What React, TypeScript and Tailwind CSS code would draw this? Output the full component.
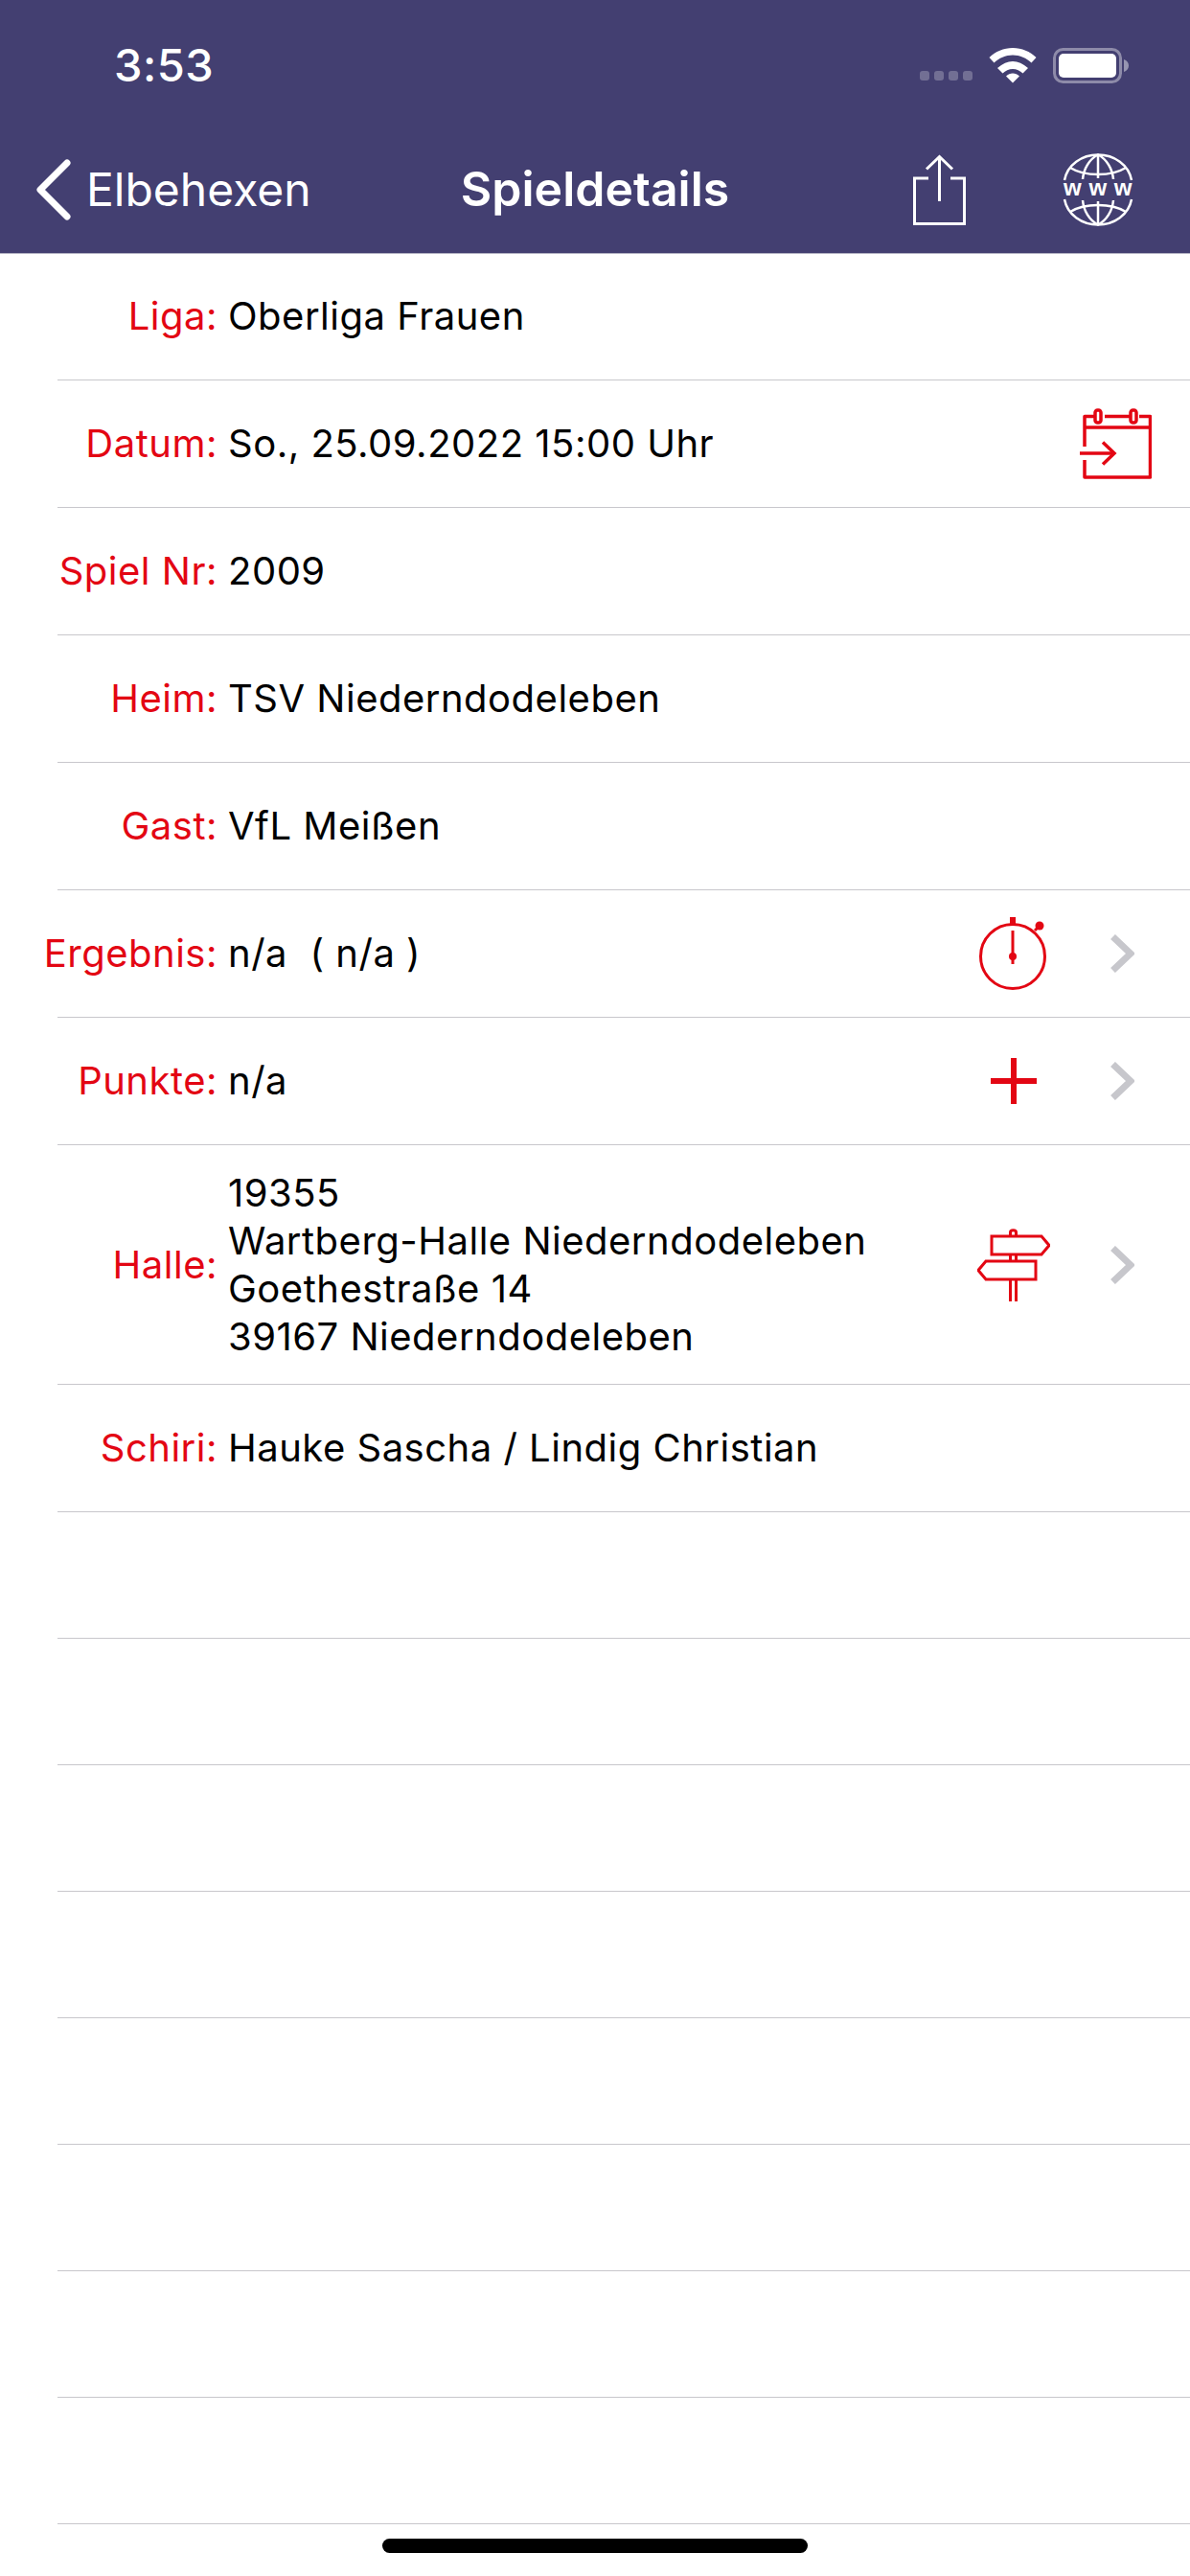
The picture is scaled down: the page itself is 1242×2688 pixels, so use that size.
const RED = "#e30613";

const WifiIcon = () => (
  <svg width="50" height="37" viewBox="0 0 50 37" fill="white">
    <path d="M25 0C15.500 0 7 3.700 0.500 10L5.500 15.500C10.700 10.500 17.500 7.500 25 7.500C32.500 7.500 39.300 10.500 44.500 15.500L49.500 10C43 3.700 34.500 0 25 0Z" />
    <path d="M25 14C19.500 14 14.500 16.200 9 21L14.500 26.500C17.300 23.800 21 22 25 22C29 22 32.700 23.800 35.500 26.500L41 21C35.500 16.200 30.500 14 25 14Z" />
    <path d="M25 26.500C22.500 26.500 20 27.500 18 29.500L25 36.500L32 29.500C30 27.500 27.500 26.500 25 26.500Z" />
  </svg>
);

const BatteryIcon = () => (
  <svg width="80" height="37" viewBox="0 0 80 37">
    <rect x="1.500" y="1.500" width="69" height="34" rx="9" fill="none" stroke="white" strokeOpacity="0.4" strokeWidth="3" />
    <rect x="6" y="6" width="60" height="25" rx="5" fill="white" />
    <path d="M74 12C77 13 79 15.500 79 18.500C79 21.500 77 24 74 25Z" fill="white" fillOpacity="0.45" />
  </svg>
);

const ShareIcon = () => (
  <svg width="55" height="74" viewBox="0 0 55 74" fill="none" stroke="white" strokeWidth="3">
    <path d="M16 25H1.500V72.500H53.500V25H39" />
    <path d="M27.500 3V49" />
    <path d="M14 15.500L27.500 2.500L41 15.500" />
  </svg>
);

const GlobeIcon = () => (
  <svg width="74" height="76" viewBox="0 0 74 76" fill="none" stroke="white" strokeWidth="2.500">
    <path d="M2 28C5 12 20 1.500 37 1.500C54 1.500 69 12 72 28" />
    <path d="M2 48C5 64 20 74.500 37 74.500C54 74.500 69 64 72 48" />
    <path d="M37 1.500V26M37 50V74.500" />
    <path d="M21 27C22 16 28 6 37 1.500C46 6 52 16 53 27" />
    <path d="M21 49C22 60 28 70 37 74.500C46 70 52 60 53 49" />
    <path d="M8 15C16 20 26 22 37 22C48 22 58 20 66 15" />
    <path d="M8 61C16 56 26 54 37 54C48 54 58 56 66 61" />
    <text x="1" y="44" textLength="72" fill="white" stroke="none" fontSize="24" fontWeight="700" fontFamily="Liberation Sans, sans-serif">www</text>
  </svg>
);

const CalendarIcon = () => (
  <svg width="76" height="76" viewBox="0 0 76 76" fill="none" stroke={RED} strokeWidth="3.500">
    <path d="M6 41V9.500H17M27 9.500H53M63 9.500H74.500V73H6V55" strokeLinejoin="round" />
    <rect x="17" y="3" width="6" height="13" rx="2.500" />
    <rect x="54" y="3" width="6" height="13" rx="2.500" />
    <path d="M6 21H74.500" />
    <path d="M1 48H37" />
    <path d="M25 36.500L37 48L25 59.500" />
  </svg>
);

const StopwatchIcon = () => (
  <svg width="74" height="78" viewBox="0 0 74 78" fill="none" stroke={RED} strokeWidth="3">
    <circle cx="36" cy="42" r="33.500" />
    <path d="M36 1V8" strokeWidth="6" />
    <path d="M36 15V50" strokeWidth="3" />
    <circle cx="36" cy="42" r="4" fill={RED} stroke="none" />
    <circle cx="64" cy="10" r="4.500" fill={RED} stroke="none" />
    <path d="M59 15L63 11" strokeWidth="3" />
  </svg>
);

const PlusIcon = () => (
  <svg width="50" height="50" viewBox="0 0 50 50" fill={RED}>
    <rect x="22" y="1" width="6" height="48" />
    <rect x="1" y="22" width="48" height="6" />
  </svg>
);

const SignpostIcon = () => (
  <svg width="76" height="76" viewBox="0 0 76 76" fill="none" stroke={RED} strokeWidth="3">
    <path d="M15 8H67L75 17.500L67 27H15Z" />
    <path d="M61 34H9L1 43.500L9 53H61Z" />
    <path d="M34.500 8V4C34.500 1 40.500 1 40.500 4V8" />
    <path d="M34.500 27V34M40.500 27V34" />
    <path d="M34.500 53V76M40.500 53V76" />
  </svg>
);

const Chevron = () => (
  <svg width="25" height="40" viewBox="0 0 25 40" fill="none" stroke="#c7c7cc" strokeWidth="7">
    <path d="M2.500 2.500L21 20L2.500 37.500" />
  </svg>
);

type Row = {
  label: string;
  value: string[];
  icon?: React.ReactNode;
  chevron?: boolean;
  tall?: boolean;
};

const ROWS: Row[] = [
  { label: "Liga:", value: ["Oberliga Frauen"] },
  { label: "Datum:", value: ["So., 25.09.2022 15:00 Uhr"], icon: <CalendarIcon /> },
  { label: "Spiel Nr:", value: ["2009"] },
  { label: "Heim:", value: ["TSV Niederndodeleben"] },
  { label: "Gast:", value: ["VfL Meißen"] },
  { label: "Ergebnis:", value: ["n/a\u00a0\u00a0( n/a )"], icon: <StopwatchIcon />, chevron: true },
  { label: "Punkte:", value: ["n/a"], icon: <PlusIcon />, chevron: true },
  {
    label: "Halle:",
    value: ["19355", "Wartberg-Halle Niederndodeleben", "Goethestraße 14", "39167 Niederndodeleben"],
    icon: <SignpostIcon />,
    chevron: true,
    tall: true,
  },
  { label: "Schiri:", value: ["Hauke Sascha / Lindig Christian"] },
];

const Separator = () => <div className="ml-[60px] h-px bg-[#c8c7cc]" />;

const DetailRow = ({ row }: { row: Row }) => (
  <div className={`flex items-center ${row.tall ? "h-[249px]" : "h-[132px]"}`}>
    <div className="w-[227px] shrink-0 text-right text-[#e30613]">{row.label}</div>
    <div className="ml-[11px] flex-1 leading-[50px] text-black">
      {row.value.map((line) => (
        <div key={line}>{line}</div>
      ))}
    </div>
    {row.icon && row.chevron ? (
      <div className="flex items-center">
        <div className="flex w-[76px] justify-center">{row.icon}</div>
        <div className="ml-[63px] mr-[58px]">
          <Chevron />
        </div>
      </div>
    ) : null}
    {row.icon && !row.chevron ? <div className="mr-[40px] flex">{row.icon}</div> : null}
  </div>
);

export default function App() {
  return (
    <div className="relative h-[2688px] w-[1242px] overflow-hidden bg-white font-['Inter',sans-serif] text-[40px] tracking-[0.5px]">
      <header className="h-[264px] bg-[#433f71] text-white">
        <div className="flex h-[136px] items-center pb-[2px] pl-[119px] pr-[63px]">
          <span className="text-[47px] font-medium leading-none">3:53</span>
          <div className="ml-auto flex items-center pt-[2px]">
            <div className="mt-[22px] flex gap-[5px]">
              <span className="h-[10px] w-[10px] rounded-[3px] bg-white/25" />
              <span className="h-[10px] w-[10px] rounded-[3px] bg-white/25" />
              <span className="h-[10px] w-[10px] rounded-[3px] bg-white/25" />
              <span className="h-[10px] w-[10px] rounded-[3px] bg-white/25" />
            </div>
            <div className="ml-[17px] flex">
              <WifiIcon />
            </div>
            <div className="ml-[17px] flex">
              <BatteryIcon />
            </div>
          </div>
        </div>
        <nav className="grid h-[128px] grid-cols-[1fr_auto_1fr] items-center pb-[5px]">
          <div className="flex items-center pl-[38px] text-[48px] tracking-normal">
            <svg width="36" height="64" viewBox="0 0 36 64" fill="none" stroke="white" strokeWidth="7" strokeLinecap="round" strokeLinejoin="round">
              <path d="M32 4L4 32L32 60" />
            </svg>
            <span className="ml-[16px]">Elbehexen</span>
          </div>
          <div className="text-[50px] font-semibold tracking-normal">Spieldetails</div>
          <div className="flex items-center justify-end pr-[59px]">
            <ShareIcon />
            <div className="ml-[101px] flex">
              <GlobeIcon />
            </div>
          </div>
        </nav>
      </header>
      <div className="-mb-px h-px bg-[#b5b4c4]" />
      {ROWS.map((row, index) => (
        <div key={row.label}>
          <DetailRow row={row} />
          {index < ROWS.length - 1 ? <Separator /> : null}
        </div>
      ))}
      <Separator />
      {[0, 1, 2, 3, 4, 5, 6, 7].map((n) => (
        <div key={n} className="pt-[131px]">
          <Separator />
        </div>
      ))}
      <div className="absolute bottom-[24px] left-[399px] h-[15px] w-[444px] rounded-full bg-black" />
    </div>
  );
}
